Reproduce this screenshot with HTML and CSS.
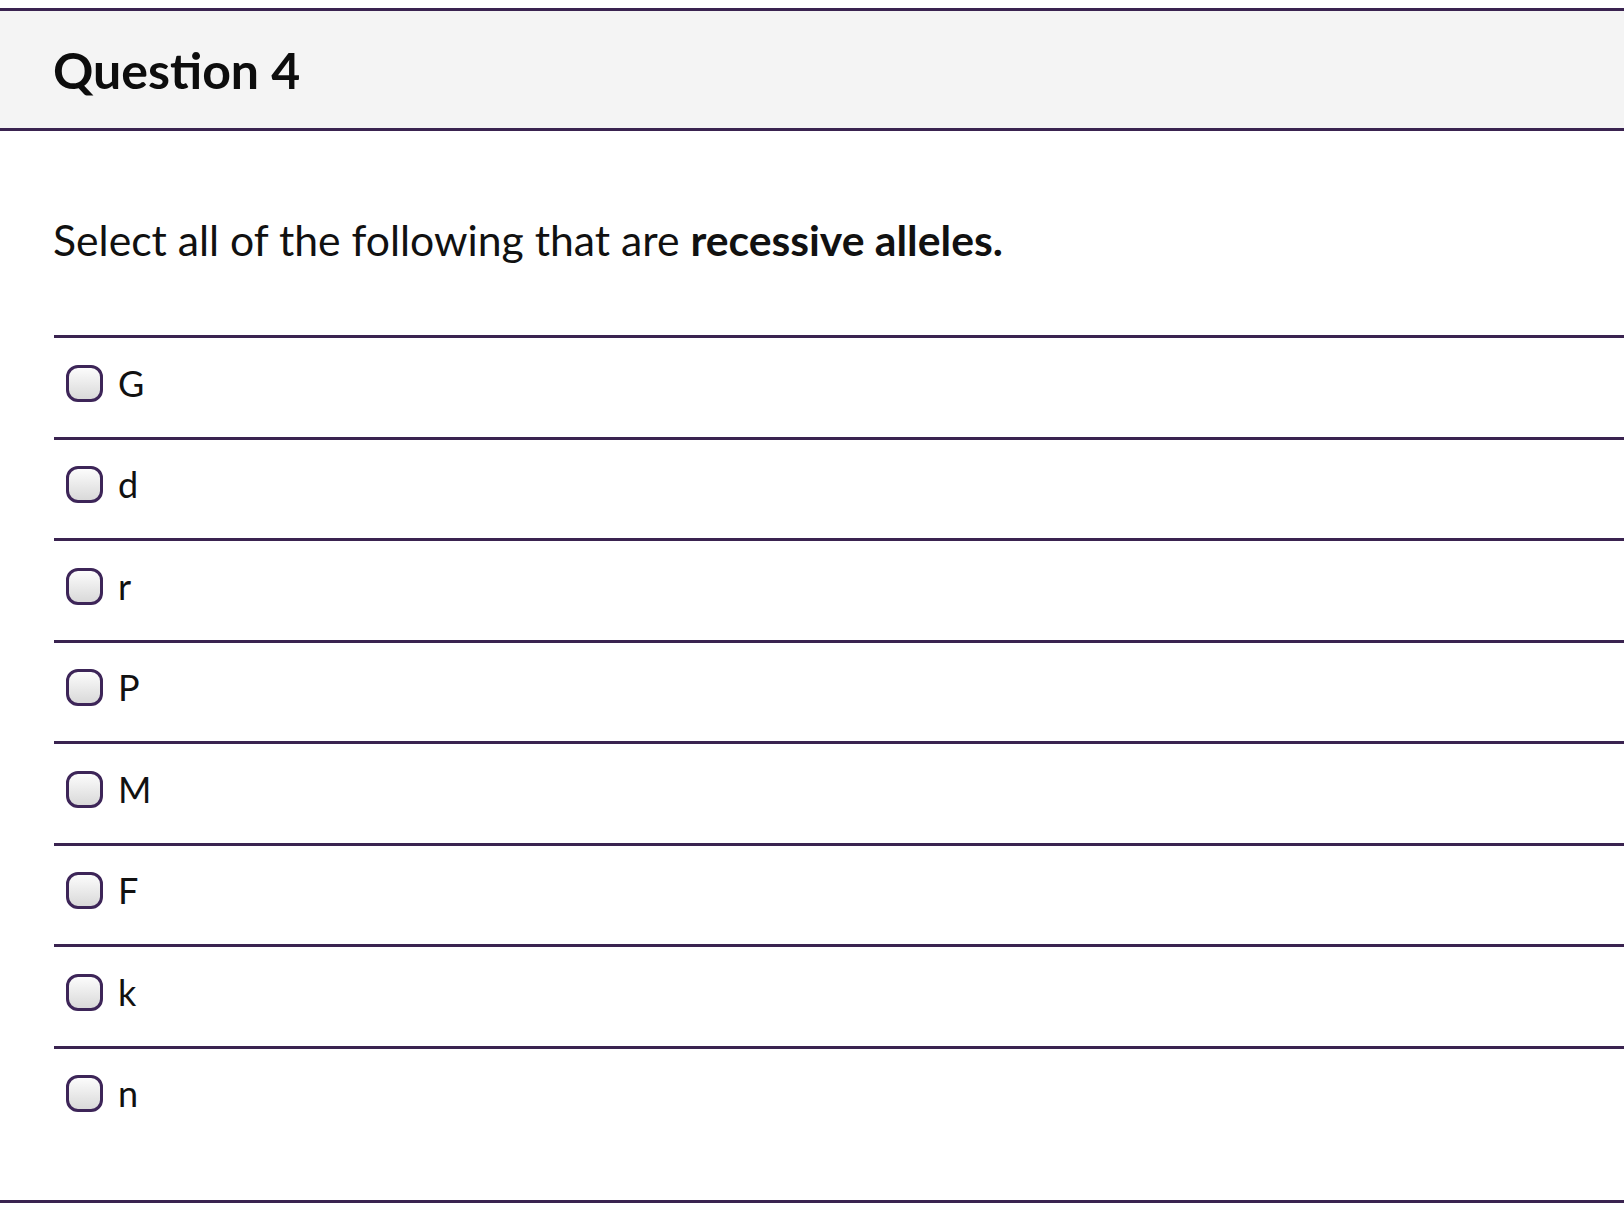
FILE: index.html
```html
<!DOCTYPE html>
<html lang="en">
<head>
<meta charset="utf-8">
<title>Question 4</title>
<link rel="stylesheet" href="styles.css">
</head>
<body>
<div class="quiz">
  <header class="q-header">
    <h2 class="q-title">Question 4</h2>
  </header>
  <section class="q-body">
    <p class="q-text">Select all of the following that are <strong>recessive alleles.</strong></p>
    <ul class="answers">
      <li class="answer"><span class="box"></span><span class="label">G</span></li>
      <li class="answer"><span class="box"></span><span class="label">d</span></li>
      <li class="answer"><span class="box"></span><span class="label">r</span></li>
      <li class="answer"><span class="box"></span><span class="label">P</span></li>
      <li class="answer"><span class="box"></span><span class="label">M</span></li>
      <li class="answer"><span class="box"></span><span class="label">F</span></li>
      <li class="answer"><span class="box"></span><span class="label">k</span></li>
      <li class="answer"><span class="box"></span><span class="label">n</span></li>
    </ul>
  </section>
</div>
</body>
</html>
```
FILE: styles.css
```css
html, body {
  margin: 0;
  padding: 0;
  background: #ffffff;
}

body {
  font-family: Lato, "Open Sans", "Liberation Sans", sans-serif;
  color: #111111;
}

.quiz {
  padding-top: 8px;
}

.q-header {
  box-sizing: content-box;
  height: 117px;
  background: #f4f4f4;
  border-top: 3px solid #3a2350;
  border-bottom: 3px solid #3a2350;
  display: flex;
  align-items: center;
  padding-left: 53px;
}

.q-title {
  margin: 0;
  font-size: 50px;
  font-weight: 700;
  line-height: 1.2;
  color: #0d0d0d;
}

.q-body {
  border-bottom: 3px solid #3a2350;
  padding-bottom: 52.5px;
}

.q-text {
  margin: 83px 0 70px 53px;
  font-size: 42.7px;
  line-height: 1.2;
  color: #111111;
}

.q-text strong {
  font-weight: 700;
}

.answers {
  list-style: none;
  margin: 0 0 0 54px;
  padding: 0;
}

.answer {
  box-sizing: border-box;
  height: 101.5px;
  border-top: 3px solid #3a2350;
  padding: 0 0 8px 12px;
  display: flex;
  align-items: center;
}

.box {
  box-sizing: border-box;
  width: 37px;
  height: 37px;
  flex: none;
  border: 3px solid #3d2558;
  border-radius: 12px;
  background: linear-gradient(to bottom, #fcfcfc, #d9d9d9);
}

.label {
  margin-left: 15px;
  font-size: 36px;
  line-height: 1.2;
  color: #111111;
}
```
